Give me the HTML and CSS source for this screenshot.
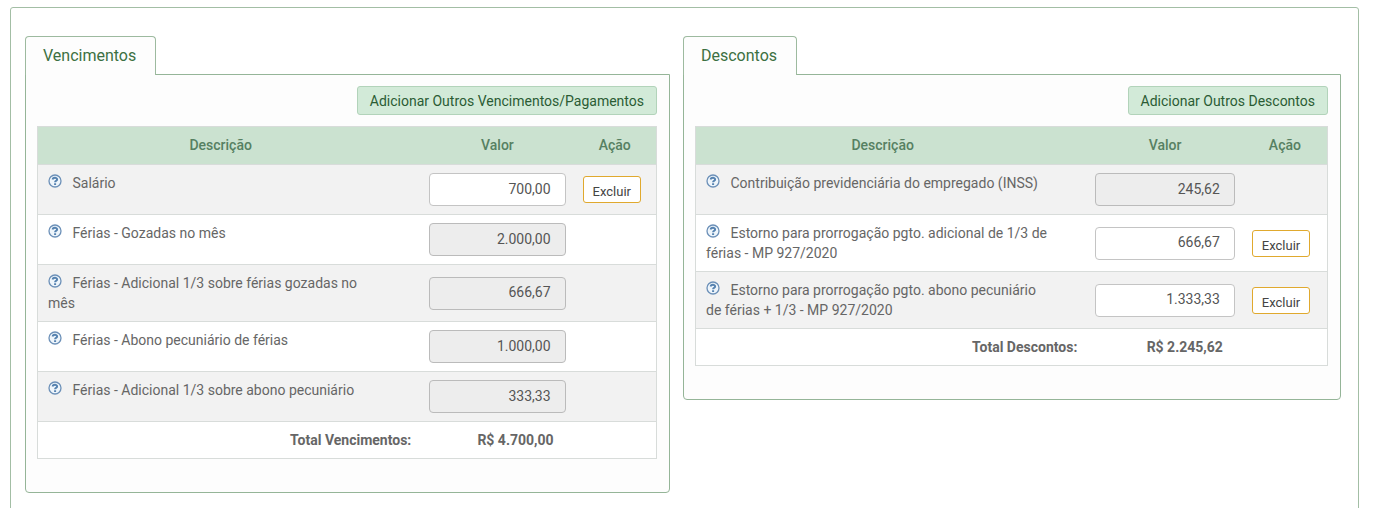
FILE: index.html
```html
<!DOCTYPE html>
<html lang="pt-BR">
<head>
  <meta charset="UTF-8" />
  <meta name="viewport" content="width=device-width, initial-scale=1.0" />
  <title>Vencimentos e Descontos</title>
  <link rel="stylesheet" href="styles.css">
</head>
<body>
  <svg class="sprite" aria-hidden="true">
    <symbol id="help" viewBox="0 0 14 14">
      <circle cx="7" cy="7" r="6" fill="#eef5fb" stroke="#6c90b8" stroke-width="1.3" />
      <path d="M4.8 5.6C4.8 3.3 9.1 3.3 9.1 5.4C9.1 6.8 7.1 6.7 7.1 8.3M7.1 9.2V10.9" fill="none" stroke="#5582b0" stroke-width="2" />
    </symbol>
  </svg>

  <main class="container">
    <section class="panel">
      <h2 class="tab">Vencimentos</h2>
      <div class="panel-body">
        <div class="actions">
          <button type="button" class="btn-add">Adicionar Outros Vencimentos/Pagamentos</button>
        </div>
        <table>
          <thead>
            <tr>
              <th class="desc">Descrição</th>
              <th class="value">Valor</th>
              <th class="action">Ação</th>
            </tr>
          </thead>
          <tbody>
            <tr>
              <td class="desc"><svg class="help"><use href="#help" /></svg> <label for="v1">Salário</label></td>
              <td class="value"><input type="text" id="v1" value="700,00" /></td>
              <td class="action"><button type="button" class="btn-delete">Excluir</button></td>
            </tr>
            <tr>
              <td class="desc"><svg class="help"><use href="#help" /></svg> <label for="v2">Férias - Gozadas no mês</label></td>
              <td class="value"><input type="text" id="v2" value="2.000,00" disabled /></td>
              <td class="action"></td>
            </tr>
            <tr>
              <td class="desc"><svg class="help"><use href="#help" /></svg> <label for="v3">Férias - Adicional 1/3 sobre férias gozadas no mês</label></td>
              <td class="value"><input type="text" id="v3" value="666,67" disabled /></td>
              <td class="action"></td>
            </tr>
            <tr>
              <td class="desc"><svg class="help"><use href="#help" /></svg> <label for="v4">Férias - Abono pecuniário de férias</label></td>
              <td class="value"><input type="text" id="v4" value="1.000,00" disabled /></td>
              <td class="action"></td>
            </tr>
            <tr>
              <td class="desc"><svg class="help"><use href="#help" /></svg> <label for="v5">Férias - Adicional 1/3 sobre abono pecuniário</label></td>
              <td class="value"><input type="text" id="v5" value="333,33" disabled /></td>
              <td class="action"></td>
            </tr>
          </tbody>
          <tfoot>
            <tr>
              <td class="total-label">Total Vencimentos:</td>
              <td class="total">R$ 4.700,00</td>
              <td></td>
            </tr>
          </tfoot>
        </table>
      </div>
    </section>

    <section class="panel">
      <h2 class="tab">Descontos</h2>
      <div class="panel-body">
        <div class="actions">
          <button type="button" class="btn-add">Adicionar Outros Descontos</button>
        </div>
        <table>
          <thead>
            <tr>
              <th class="desc">Descrição</th>
              <th class="value">Valor</th>
              <th class="action">Ação</th>
            </tr>
          </thead>
          <tbody>
            <tr>
              <td class="desc"><svg class="help"><use href="#help" /></svg> <label for="d1">Contribuição previdenciária do empregado (INSS)</label></td>
              <td class="value"><input type="text" id="d1" value="245,62" disabled /></td>
              <td class="action"></td>
            </tr>
            <tr>
              <td class="desc"><svg class="help"><use href="#help" /></svg> <label for="d2">Estorno para prorrogação pgto. adicional de 1/3 de férias - MP 927/2020</label></td>
              <td class="value"><input type="text" id="d2" value="666,67" /></td>
              <td class="action"><button type="button" class="btn-delete">Excluir</button></td>
            </tr>
            <tr>
              <td class="desc"><svg class="help"><use href="#help" /></svg> <label for="d3">Estorno para prorrogação pgto. abono pecuniário de férias + 1/3 - MP 927/2020</label></td>
              <td class="value"><input type="text" id="d3" value="1.333,33" /></td>
              <td class="action"><button type="button" class="btn-delete">Excluir</button></td>
            </tr>
          </tbody>
          <tfoot>
            <tr>
              <td class="total-label">Total Descontos:</td>
              <td class="total">R$ 2.245,62</td>
              <td></td>
            </tr>
          </tfoot>
        </table>
      </div>
    </section>
  </main>
</body>
</html>
```
FILE: styles.css
```css
* {
  box-sizing: border-box;
}
body {
  margin: 0;
  padding: 7px 16px 0 10px;
  background-color: #fff;
  color: #666;
  font-family: Roboto, Arial, sans-serif;
  font-size: 14px;
  line-height: 20px;
}
button, input {
  font-family: inherit;
}
.sprite {
  display: none;
}
.container {
  display: grid;
  grid-template-columns: 645fr 658fr;
  align-items: start;
  gap: 13px;
  min-height: 100vh;
  padding: 28px 17px 28px 14px;
  border: 1px solid #a3bea5;
  border-radius: 3px;
}
.tab {
  position: relative;
  width: fit-content;
  margin: 0 0 -1px;
  padding: 9px 19px 9px 17px;
  border: 1px solid #9dba9f;
  border-bottom: 0;
  border-radius: 4px 4px 0 0;
  background-color: #fdfdfd;
  color: #3c7042;
  font-size: 16px;
  font-weight: 400;
}
.panel-body {
  padding: 11px 12px 33px 11px;
  border: 1px solid #95b598;
  border-radius: 0 0 4px 4px;
  background-color: #fdfdfd;
}
.actions {
  display: flex;
  justify-content: flex-end;
  margin-bottom: 11px;
}
.btn-add {
  padding: 5px 12px 3px;
  border: 1px solid #b2d3ba;
  border-radius: 3px;
  background-color: #d2ead8;
  color: #2b5c34;
  font-size: 14px;
  line-height: 19px;
}
table {
  width: 100%;
  table-layout: fixed;
  border-collapse: collapse;
  border: 1px solid #d8dcda;
  background-color: #fff;
}
tr {
  border-bottom: 1px solid #d8dcda;
}
th {
  padding: 8px 8px 9px;
  background-color: #cbe2d0;
  color: #568062;
  font-weight: 500;
}
td {
  padding: 8px;
}
.desc {
  padding-left: 10px;
  padding-right: 28px;
  vertical-align: top;
}
td.desc {
  padding-right: 36px;
}
th.value {
  width: 24.6%;
}
th.action {
  width: 13.4%;
}
td.action {
  padding: 0 9px;
}
tbody tr:nth-child(odd) {
  background-color: #f2f2f2;
}
.help {
  width: 14px;
  height: 14px;
  margin-right: 7px;
}
.value input {
  display: block;
  width: 100%;
  height: 33px;
  padding: 4px 14px 6px;
  border: 1px solid #c4c4c4;
  border-radius: 4px;
  background-color: #fff;
  color: #555;
  font-size: 14px;
  text-align: right;
}
.value input:disabled {
  border-color: #bbb;
  background-color: #ededed;
}
.btn-delete {
  padding: 6px 9px 1px;
  border: 1px solid #e0a92e;
  border-radius: 3px;
  background-color: #fff;
  color: #444;
  font-size: 13px;
  line-height: 18px;
}
.total-label, .total {
  font-weight: 700;
  text-align: right;
}
.total-label {
  padding-right: 10px;
}
.total {
  padding-right: 20px;
}
```
